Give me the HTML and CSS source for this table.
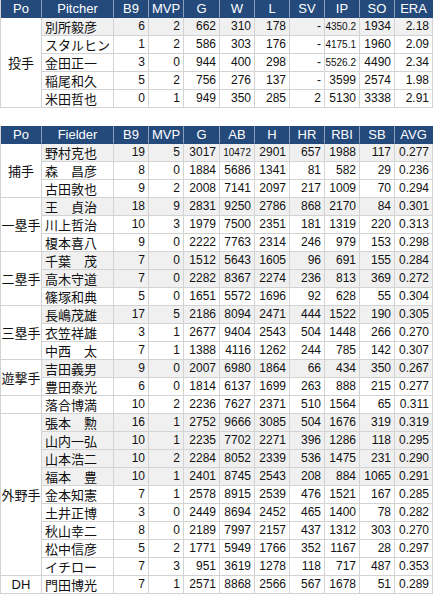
FILE: index.html
```html
<!DOCTYPE html>
<html lang="ja">
<head>
<meta charset="utf-8">
<title>Records</title>
<link rel="stylesheet" href="styles.css">
</head>
<body>
<table class="stats pitchers">
  <thead>
    <tr><th class="c-po">Po</th><th class="c-name">Pitcher</th><th class="c-n">B9</th><th class="c-n">MVP</th><th class="c-g">G</th><th class="c-n">W</th><th class="c-n">L</th><th class="c-n">SV</th><th class="c-n">IP</th><th class="c-n">SO</th><th class="c-last">ERA</th></tr>
  </thead>
  <tbody>
    <tr class="hl"><td class="po" rowspan="5">投手</td><td class="name">別所毅彦</td><td>6</td><td>2</td><td>662</td><td>310</td><td>178</td><td>-</td><td class="sm">4350.2</td><td>1934</td><td>2.18</td></tr>
    <tr><td class="name">スタルヒン</td><td>1</td><td>2</td><td>586</td><td>303</td><td>176</td><td>-</td><td class="sm">4175.1</td><td>1960</td><td>2.09</td></tr>
    <tr><td class="name">金田正一</td><td>3</td><td>0</td><td>944</td><td>400</td><td>298</td><td>-</td><td class="sm">5526.2</td><td>4490</td><td>2.34</td></tr>
    <tr><td class="name">稲尾和久</td><td>5</td><td>2</td><td>756</td><td>276</td><td>137</td><td>-</td><td>3599</td><td>2574</td><td>1.98</td></tr>
    <tr><td class="name">米田哲也</td><td>0</td><td>1</td><td>949</td><td>350</td><td>285</td><td>2</td><td>5130</td><td>3338</td><td>2.91</td></tr>
  </tbody>
</table>

<table class="stats fielders">
  <thead>
    <tr><th class="c-po">Po</th><th class="c-name">Fielder</th><th class="c-n">B9</th><th class="c-n">MVP</th><th class="c-g">G</th><th class="c-n">AB</th><th class="c-n">H</th><th class="c-n">HR</th><th class="c-n">RBI</th><th class="c-n">SB</th><th class="c-last">AVG</th></tr>
  </thead>
  <tbody>
    <tr class="hl"><td class="po" rowspan="3">捕手</td><td class="name">野村克也</td><td>19</td><td>5</td><td>3017</td><td class="sm">10472</td><td>2901</td><td>657</td><td>1988</td><td>117</td><td>0.277</td></tr>
    <tr><td class="name">森　昌彦</td><td>8</td><td>0</td><td>1884</td><td>5686</td><td>1341</td><td>81</td><td>582</td><td>29</td><td>0.236</td></tr>
    <tr><td class="name">古田敦也</td><td>9</td><td>2</td><td>2008</td><td>7141</td><td>2097</td><td>217</td><td>1009</td><td>70</td><td>0.294</td></tr>

    <tr class="hl"><td class="po" rowspan="3">一塁手</td><td class="name">王　貞治</td><td>18</td><td>9</td><td>2831</td><td>9250</td><td>2786</td><td>868</td><td>2170</td><td>84</td><td>0.301</td></tr>
    <tr><td class="name">川上哲治</td><td>10</td><td>3</td><td>1979</td><td>7500</td><td>2351</td><td>181</td><td>1319</td><td>220</td><td>0.313</td></tr>
    <tr><td class="name">榎本喜八</td><td>9</td><td>0</td><td>2222</td><td>7763</td><td>2314</td><td>246</td><td>979</td><td>153</td><td>0.298</td></tr>

    <tr class="hl"><td class="po" rowspan="3">二塁手</td><td class="name">千葉　茂</td><td>7</td><td>0</td><td>1512</td><td>5643</td><td>1605</td><td>96</td><td>691</td><td>155</td><td>0.284</td></tr>
    <tr class="hl"><td class="name">高木守道</td><td>7</td><td>0</td><td>2282</td><td>8367</td><td>2274</td><td>236</td><td>813</td><td>369</td><td>0.272</td></tr>
    <tr><td class="name">篠塚和典</td><td>5</td><td>0</td><td>1651</td><td>5572</td><td>1696</td><td>92</td><td>628</td><td>55</td><td>0.304</td></tr>

    <tr class="hl"><td class="po" rowspan="3">三塁手</td><td class="name">長嶋茂雄</td><td>17</td><td>5</td><td>2186</td><td>8094</td><td>2471</td><td>444</td><td>1522</td><td>190</td><td>0.305</td></tr>
    <tr><td class="name">衣笠祥雄</td><td>3</td><td>1</td><td>2677</td><td>9404</td><td>2543</td><td>504</td><td>1448</td><td>266</td><td>0.270</td></tr>
    <tr><td class="name">中西　太</td><td>7</td><td>1</td><td>1388</td><td>4116</td><td>1262</td><td>244</td><td>785</td><td>142</td><td>0.307</td></tr>

    <tr class="hl"><td class="po" rowspan="2">遊撃手</td><td class="name">吉田義男</td><td>9</td><td>0</td><td>2007</td><td>6980</td><td>1864</td><td>66</td><td>434</td><td>350</td><td>0.267</td></tr>
    <tr><td class="name">豊田泰光</td><td>6</td><td>0</td><td>1814</td><td>6137</td><td>1699</td><td>263</td><td>888</td><td>215</td><td>0.277</td></tr>

    <tr><td class="po"></td><td class="name">落合博満</td><td>10</td><td>2</td><td>2236</td><td>7627</td><td>2371</td><td>510</td><td>1564</td><td>65</td><td>0.311</td></tr>

    <tr class="hl"><td class="po" rowspan="9">外野手</td><td class="name">張本　勲</td><td>16</td><td>1</td><td>2752</td><td>9666</td><td>3085</td><td>504</td><td>1676</td><td>319</td><td>0.319</td></tr>
    <tr class="hl"><td class="name">山内一弘</td><td>10</td><td>1</td><td>2235</td><td>7702</td><td>2271</td><td>396</td><td>1286</td><td>118</td><td>0.295</td></tr>
    <tr class="hl"><td class="name">山本浩二</td><td>10</td><td>2</td><td>2284</td><td>8052</td><td>2339</td><td>536</td><td>1475</td><td>231</td><td>0.290</td></tr>
    <tr class="hl"><td class="name">福本　豊</td><td>10</td><td>1</td><td>2401</td><td>8745</td><td>2543</td><td>208</td><td>884</td><td>1065</td><td>0.291</td></tr>
    <tr><td class="name">金本知憲</td><td>7</td><td>1</td><td>2578</td><td>8915</td><td>2539</td><td>476</td><td>1521</td><td>167</td><td>0.285</td></tr>
    <tr><td class="name">土井正博</td><td>3</td><td>0</td><td>2449</td><td>8694</td><td>2452</td><td>465</td><td>1400</td><td>78</td><td>0.282</td></tr>
    <tr><td class="name">秋山幸二</td><td>8</td><td>0</td><td>2189</td><td>7997</td><td>2157</td><td>437</td><td>1312</td><td>303</td><td>0.270</td></tr>
    <tr><td class="name">松中信彦</td><td>5</td><td>2</td><td>1771</td><td>5949</td><td>1766</td><td>352</td><td>1167</td><td>28</td><td>0.297</td></tr>
    <tr><td class="name">イチロー</td><td>7</td><td>3</td><td>951</td><td>3619</td><td>1278</td><td>118</td><td>717</td><td>487</td><td>0.353</td></tr>

    <tr><td class="po po-en">DH</td><td class="name">門田博光</td><td>7</td><td>1</td><td>2571</td><td>8868</td><td>2566</td><td>567</td><td>1678</td><td>51</td><td>0.289</td></tr>
  </tbody>
</table>
</body>
</html>
```

FILE: styles.css
```css
html, body {
  margin: 0;
  padding: 0;
  background: #ffffff;
}

body {
  font-family: "Liberation Sans", Arial, "Noto Sans CJK JP", sans-serif;
  font-size: 12px;
  color: #111111;
}

.stats {
  border-collapse: separate;
  border-spacing: 0;
  table-layout: fixed;
  width: 433px;
  border-left: 1px solid #d3d3d3;
}

.pitchers {
  margin-bottom: 18px;
}

.stats th,
.stats td {
  box-sizing: border-box;
  height: 18px;
  padding: 0 3px 0 0;
  line-height: 17px;
  border-right: 1px solid #d3d3d3;
  border-bottom: 1px solid #d3d3d3;
  white-space: nowrap;
  overflow: hidden;
  vertical-align: middle;
}

.stats th {
  background: #244a7c;
  color: #ffffff;
  font-size: 13px;
  font-weight: normal;
  text-align: center;
  padding: 0;
  border-right-color: #8c9fbb;
  border-bottom-color: #244a7c;
}

.stats th.c-last {
  border-right-color: #244a7c;
}

.c-po { width: 41px; }
.c-name { width: 72px; }
.c-n { width: 35px; }
.c-g { width: 36px; }
.c-last { width: 38px; }

.stats td {
  text-align: right;
}

.stats tr.hl td {
  background: #f0f0f0;
}

.stats tr.hl td.po,
.stats td.po {
  background: #ffffff;
  text-align: center;
  padding: 0;
  font-size: 13px;
  font-family: "Noto Sans CJK JP", sans-serif;
}

.stats td.po-en {
  font-family: "Liberation Sans", Arial, sans-serif;
}

.stats td.name {
  text-align: left;
  padding: 0 0 0 3px;
  font-size: 13px;
  font-family: "Noto Sans CJK JP", sans-serif;
}

.stats td.sm {
  font-size: 10px;
}
```
